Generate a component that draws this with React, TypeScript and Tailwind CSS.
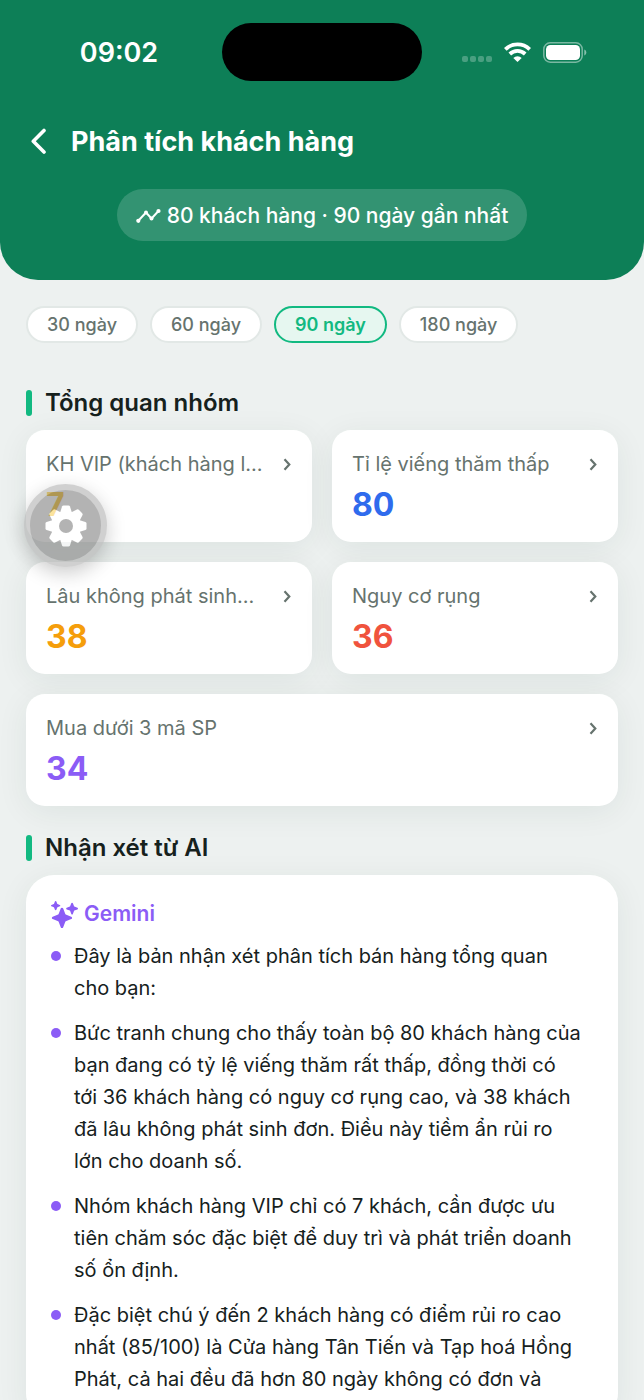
import React, { useState } from 'react';
import { IoSparkles } from 'react-icons/io5';

const periods = [30, 60, 90, 180];

const groups = [
  { label: 'KH VIP (khách hàng l...', value: 7, color: 'text-[#f5b90b]', span: '' },
  { label: 'Tỉ lệ viếng thăm thấp', value: 80, color: 'text-[#2f6bed]', span: '' },
  { label: 'Lâu không phát sinh...', value: 38, color: 'text-[#f59e0b]', span: '' },
  { label: 'Nguy cơ rụng', value: 36, color: 'text-[#f0533d]', span: '' },
  { label: 'Mua dưới 3 mã SP', value: 34, color: 'text-[#8b5cf6]', span: 'col-span-2' },
];

const insights = [
  'Đây là bản nhận xét phân tích bán hàng tổng quan cho bạn:',
  'Bức tranh chung cho thấy toàn bộ 80 khách hàng của bạn đang có tỷ lệ viếng thăm rất thấp, đồng thời có tới 36 khách hàng có nguy cơ rụng cao, và 38 khách đã lâu không phát sinh đơn. Điều này tiềm ẩn rủi ro lớn cho doanh số.',
  'Nhóm khách hàng VIP chỉ có 7 khách, cần được ưu tiên chăm sóc đặc biệt để duy trì và phát triển doanh số ổn định.',
  'Đặc biệt chú ý đến 2 khách hàng có điểm rủi ro cao nhất (85/100) là Cửa hàng Tân Tiến và Tạp hoá Hồng Phát, cả hai đều đã hơn 80 ngày không có đơn và',
];

function StatusBar() {
  return (
    <div className="grid grid-cols-[1fr_200px_1fr] items-center">
      <span className="pt-0.5 pl-4 text-center text-[27px] leading-8 font-semibold">09:02</span>
      <div className="h-[58px] rounded-full bg-black" />
      <div className="flex items-center justify-end gap-3 pr-[57px]">
        <div className="flex gap-[2px] pt-[14px]">
          {[0, 1, 2, 3].map((i) => (
            <span key={i} className="size-[6px] rounded-xs bg-white/25" />
          ))}
        </div>
        <svg width="27" height="20" viewBox="0 0 27 20" fill="none" stroke="#fff" strokeWidth="3.8">
          <path d="M1.3 7.3a17.6 17.6 0 0 1 24.4 0" />
          <path d="M5.8 12a11.3 11.3 0 0 1 15.4 0" />
          <path d="M13.5 20l-4.2-4.1a6.4 6.4 0 0 1 8.4 0z" fill="#fff" stroke="none" />
        </svg>
        <svg width="44" height="21" viewBox="0 0 44 21" fill="none">
          <rect x="0.8" y="0.8" width="38.4" height="19.4" rx="6.4" stroke="#fff" strokeOpacity="0.45" strokeWidth="1.5" />
          <rect x="3" y="3" width="34" height="15" rx="4.4" fill="#fff" />
          <path d="M41.3 7.5c1.2.4 2 1.6 2 3s-.8 2.6-2 3z" fill="#fff" fillOpacity="0.5" />
        </svg>
      </div>
    </div>
  );
}

function SectionTitle({ children }: { children: React.ReactNode }) {
  return (
    <h2 className="flex items-center gap-[13px] text-2xl leading-8 font-semibold text-[#16211d]">
      <span className="h-[26px] w-[6px] rounded-full bg-[#12b981]" />
      {children}
    </h2>
  );
}

export default function App() {
  const [period, setPeriod] = useState(90);

  return (
    <div className="relative flex h-screen flex-col overflow-hidden bg-[#edf1f0] font-['Inter','Roboto',sans-serif]">
      <header className="shrink-0 rounded-b-[38px] bg-[#0d7f57] pt-[23px] pb-[39px] text-white">
        <StatusBar />
        <div className="mt-[41px] flex items-center gap-6 px-[30px]">
          <button type="button" aria-label="Quay lại">
            <svg width="17" height="28" viewBox="0 0 17 28" fill="none" stroke="#fff" strokeWidth="3.6" strokeLinecap="round" strokeLinejoin="round">
              <path d="M14 2.5L3.3 13.2L14 24" />
            </svg>
          </button>
          <h1 className="text-[27px] leading-10 font-bold">Phân tích khách hàng</h1>
        </div>
        <div className="mt-[27px] flex justify-center">
          <p className="flex h-[52px] items-center gap-[6px] rounded-full bg-white/16 px-[19px] pt-0.5 text-[21px] font-medium">
            <svg width="25" height="24" viewBox="0 0 25 24" fill="none" stroke="#fff" strokeWidth="2" strokeLinejoin="round">
              <path d="M2.3 16.8L10 8.5L15.5 14.5L22.5 7" />
              <g fill="#fff" stroke="none">
                <circle cx="2.3" cy="16.8" r="2.1" />
                <circle cx="10" cy="8.5" r="2" />
                <circle cx="15.5" cy="14.5" r="2" />
                <circle cx="22.5" cy="7" r="2.1" />
              </g>
            </svg>
            80 khách hàng · 90 ngày gần nhất
          </p>
        </div>
      </header>

      <main className="min-h-0 flex-1 overflow-hidden px-[26px] pt-[26px]">
        <div className="flex gap-3">
          {periods.map((p) => (
            <button
              key={p}
              type="button"
              onClick={() => setPeriod(p)}
              className={
                'h-[37px] rounded-full border-2 px-[19px] text-[18px] whitespace-nowrap ' +
                (p === period
                  ? 'border-[#12b981] bg-[#e6f7f0] font-semibold text-[#12b981]'
                  : 'border-[#e2e8e6] bg-white font-medium text-[#66736e]')
              }
            >
              {p} ngày
            </button>
          ))}
        </div>

        <section className="mt-11">
          <SectionTitle>Tổng quan nhóm</SectionTitle>
          <div className="mt-[11px] grid grid-cols-2 gap-5">
            {groups.map((g) => (
              <button
                key={g.label}
                type="button"
                className={'h-[112px] min-w-0 rounded-[19px] bg-white px-5 pt-[6px] text-left shadow-[0_6px_32px_rgba(20,50,40,0.07)] ' + g.span}
              >
                <span className="flex items-center justify-between gap-4 text-[20px] leading-8 text-[#66736e]">
                  <span className="truncate">{g.label}</span>
                  <svg width="9" height="14" viewBox="0 0 9 14" className="shrink-0" fill="none" stroke="currentColor" strokeWidth="2.2">
                    <path d="M1.5 2.2L6.3 7.5L1.5 12.8" />
                  </svg>
                </span>
                <span className={'block text-[32px] leading-[50px] font-bold ' + g.color}>{g.value}</span>
              </button>
            ))}
          </div>
        </section>

        <section className="mt-[26px]">
          <SectionTitle>Nhận xét từ AI</SectionTitle>
          <div className="mt-[11px] rounded-[28px] bg-white pt-[23px] pr-9 pb-[26px] pl-[25px] shadow-[0_6px_32px_rgba(20,50,40,0.07)]">
            <div className="flex items-center gap-[6px] text-[21px] leading-8 font-semibold text-[#8b5cf6]">
              <IoSparkles size={27} />
              Gemini
            </div>
            <ul className="mt-[10px] flex flex-col gap-[13px]">
              {insights.map((text) => (
                <li key={text} className="flex gap-[13px] text-[20px] leading-8 text-[#16211d]">
                  <span className="mt-[11px] size-[10px] shrink-0 rounded-full bg-[#8b5cf6]" />
                  <span>{text}</span>
                </li>
              ))}
            </ul>
          </div>
        </section>
      </main>

      {/* Floating settings button */}
      <button
        type="button"
        aria-label="Cài đặt"
        className="absolute top-[484px] left-[24px] flex size-[83px] items-center justify-center rounded-full border-[6px] border-[#b1b1b1] bg-[#828282] opacity-60 shadow-[0_6px_20px_rgba(0,0,0,0.35)]"
      >
        <svg width="42" height="42" viewBox="-21 -21 42 42">
          <defs>
            <mask id="gear-hole">
              <rect x="-21" y="-21" width="42" height="42" fill="#fff" />
              <circle r="7" fill="#000" />
            </mask>
          </defs>
          <g fill="#fff" mask="url(#gear-hole)">
            <circle r="15" />
            {[0, 45, 90, 135, 180, 225, 270, 315].map((a) => (
              <path key={a} transform={`rotate(${a})`} d="M-6 -13L-4 -19.4Q-3.6 -20.5 -2.4 -20.5H2.4Q3.6 -20.5 4 -19.4L6 -13Z" />
            ))}
          </g>
        </svg>
      </button>
    </div>
  );
}
